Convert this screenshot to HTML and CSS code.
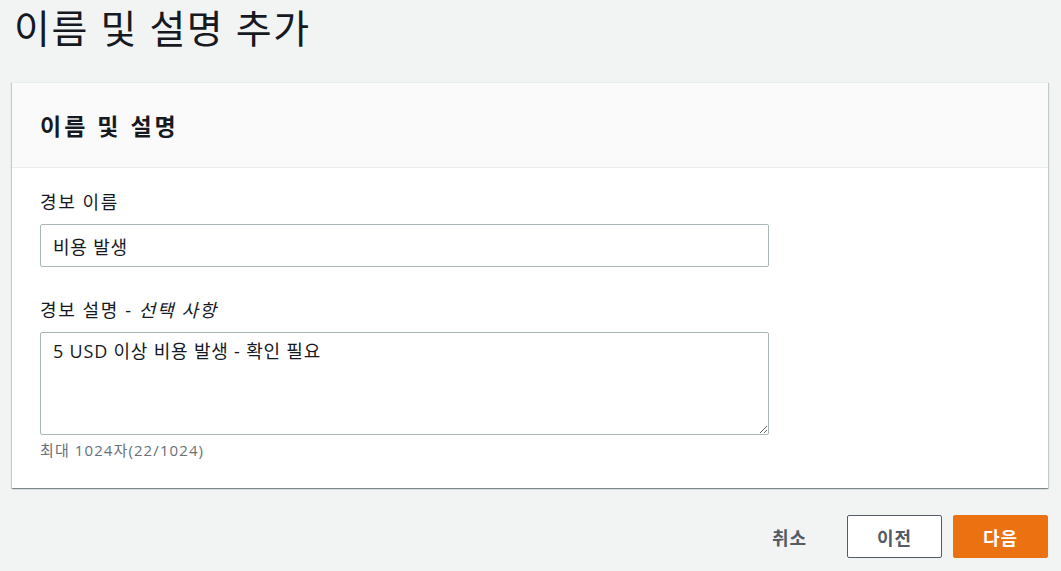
FILE: index.html
```html
<!DOCTYPE html>
<html lang="ko">
<head>
	<meta charset="UTF-8">
	<title>이름 및 설명 추가</title>
	<link rel="stylesheet" href="styles.css">
</head>
<body>
	<h1 class="page-title">이름 및 설명 추가</h1>

	<div class="card">
		<div class="card-header">
			<h2>이름 및 설명</h2>
		</div>
		<div class="card-body">
			<div class="field">
				<label class="field-label" for="alarm-name">경보 이름</label>
				<input id="alarm-name" class="text-input" type="text" value="비용 발생">
			</div>
			<div class="field">
				<label class="field-label" for="alarm-desc">경보 설명 - <i>선택 사항</i></label>
				<textarea id="alarm-desc" class="text-area">5 USD 이상 비용 발생 - 확인 필요</textarea>
				<div class="field-hint">최대 1024자(22/1024)</div>
			</div>
		</div>
	</div>

	<div class="actions">
		<button class="btn btn-link">취소</button>
		<button class="btn btn-normal">이전</button>
		<button class="btn btn-primary">다음</button>
	</div>
</body>
</html>
```

FILE: styles.css
```css
html,
body {
	margin: 0;
	background: #f2f3f3;
	color: #16191f;
	font-family: "Open Sans", "Noto Sans CJK KR", sans-serif;
}

body {
	padding: 0 13px 0 12px;
}

.page-title {
	margin: 0;
	padding: 4px 0 0 2px;
	height: 82px;
	box-sizing: border-box;
	font-size: 39px;
	font-weight: 400;
	letter-spacing: 1.5px;
	line-height: 48px;
}

.card {
	background: #fff;
	box-shadow: 0 1px 1px 0 rgba(0, 28, 36, 0.3), 1px 1px 1px 0 rgba(0, 28, 36, 0.15), -1px 1px 1px 0 rgba(0, 28, 36, 0.15);
	border-top: 1px solid #eaeded;
}

.card-header {
	background: #fafafa;
	border-bottom: 1px solid #eaeded;
	height: 85px;
	box-sizing: border-box;
	padding: 0 28px;
	display: flex;
	align-items: center;
}

.card-header h2 {
	margin: 0;
	font-size: 23px;
	font-weight: 700;
	letter-spacing: 3px;
}

.card-body {
	padding: 22px 28px 27px;
}

.field {
	width: 729px;
}

.field + .field {
	margin-top: 31px;
}

.field-label {
	display: block;
	font-size: 18px;
	letter-spacing: 1.6px;
	line-height: 24px;
	margin-bottom: 10px;
}

.field-label i {
	font-style: italic;
}

.text-input,
.text-area {
	display: block;
	width: 100%;
	box-sizing: border-box;
	border: 1px solid #aab7b8;
	border-radius: 2px;
	padding: 0 12px;
	font: inherit;
	font-size: 18px;
	letter-spacing: 0.8px;
	color: #16191f;
	background: #fff;
}

.text-input {
	height: 43px;
}

.text-area {
	height: 103px;
	padding-top: 5px;
	resize: vertical;
	line-height: 26px;
}

.field-hint {
	margin-top: 4px;
	font-size: 15px;
	letter-spacing: 1.1px;
	line-height: 22px;
	color: #687078;
}

.actions {
	display: flex;
	justify-content: flex-end;
	align-items: center;
	margin-top: 27px;
}

.btn {
	font: inherit;
	font-size: 18px;
	font-weight: 700;
	letter-spacing: 1px;
	height: 43px;
	border-radius: 2px;
	cursor: pointer;
}

.btn-link {
	background: none;
	border: 0;
	color: #545b64;
	padding: 0 20px;
	margin-right: 20px;
}

.btn-normal {
	width: 95px;
	background: #fff;
	border: 1px solid #545b64;
	color: #545b64;
	margin-right: 11px;
}

.btn-primary {
	width: 95px;
	background: #ec7211;
	border: 1px solid #ec7211;
	color: #fff;
}
```
